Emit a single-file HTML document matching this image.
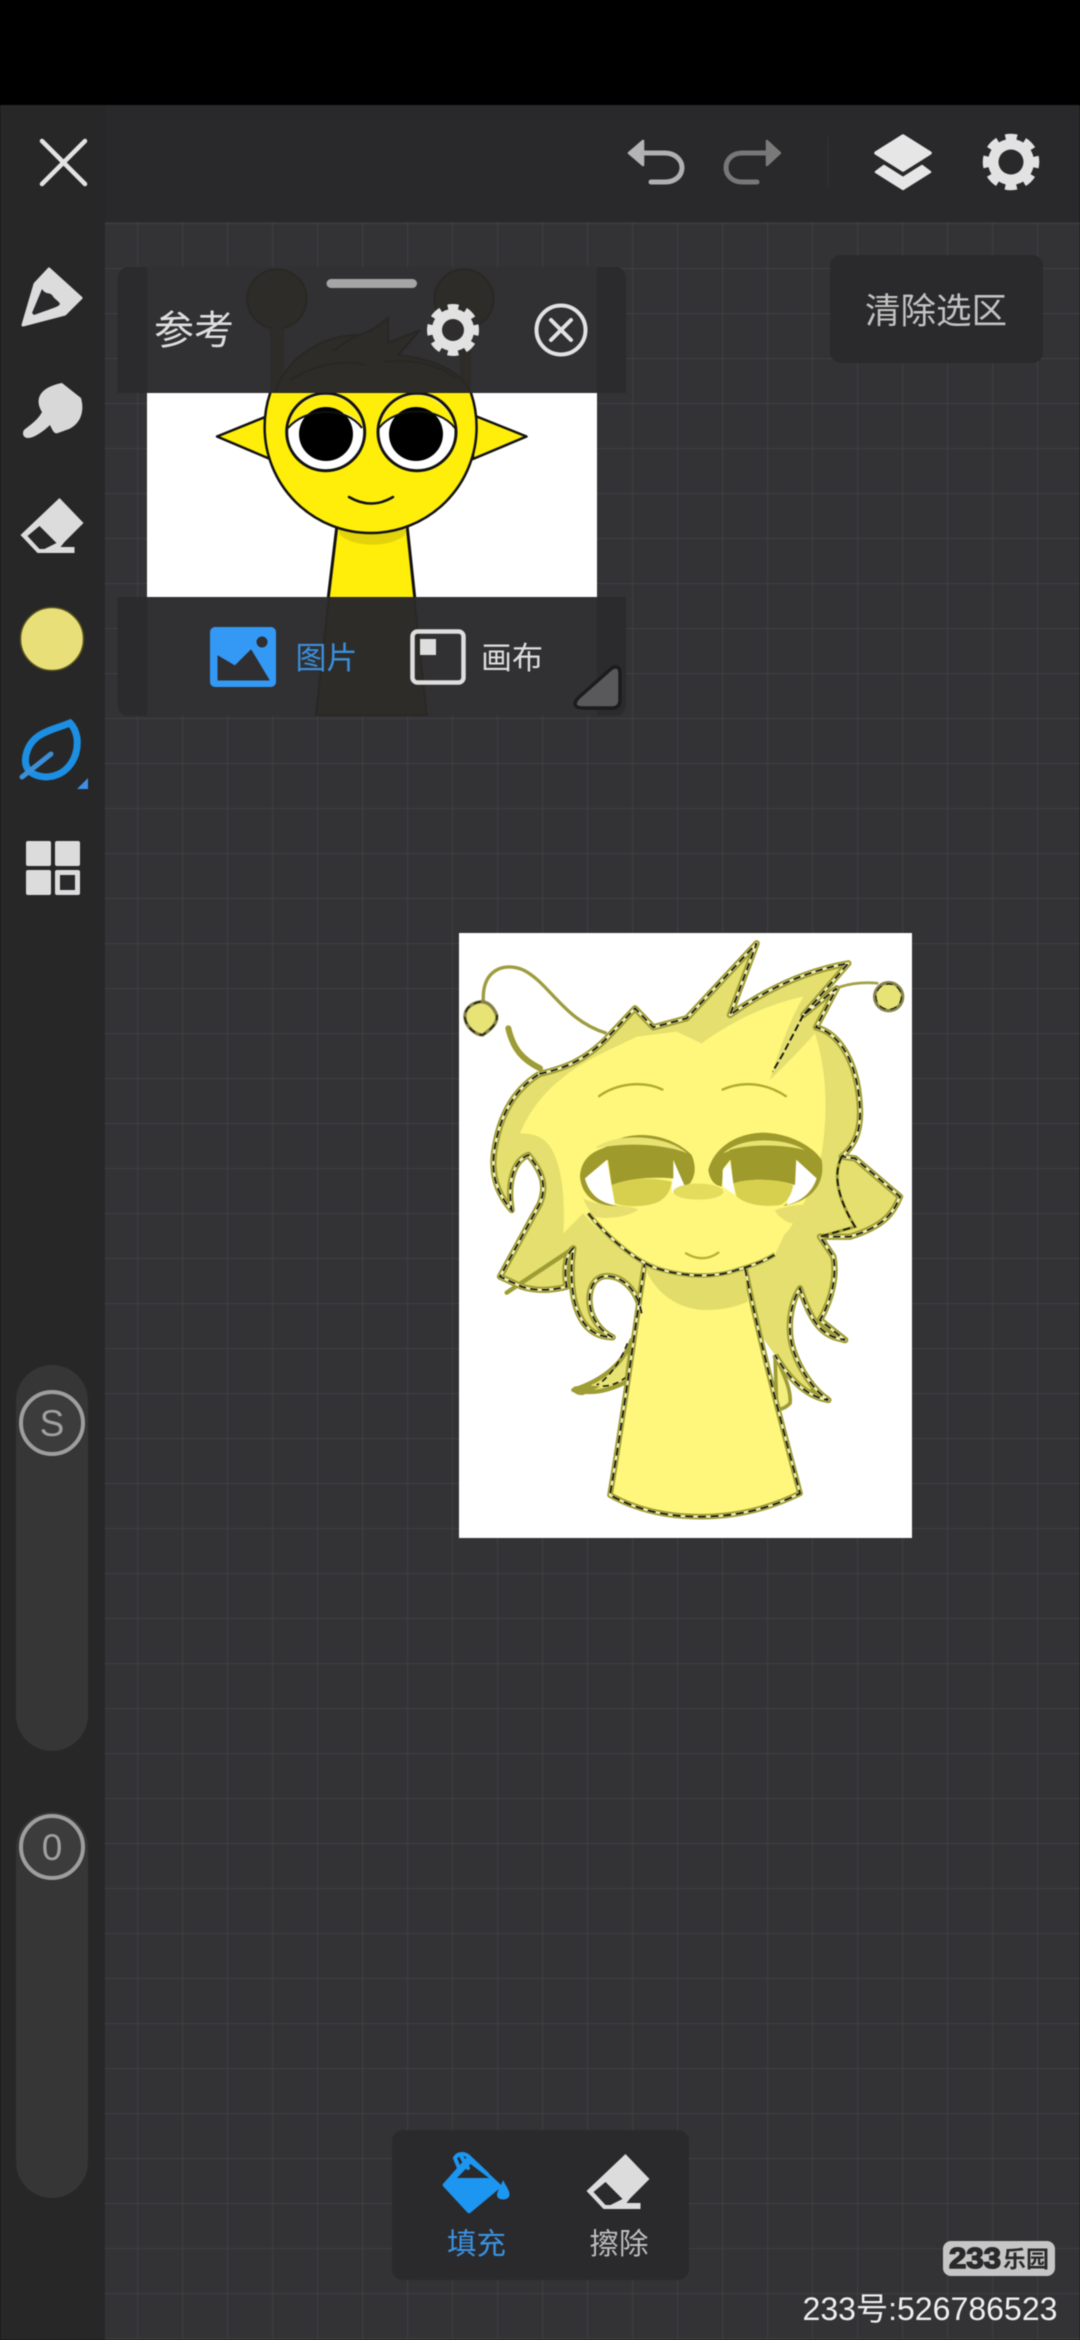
<!DOCTYPE html>
<html lang="zh"><head><meta charset="utf-8"><title>参考</title>
<style>
html,body{margin:0;padding:0;background:#000;width:1080px;height:2340px;overflow:hidden}
svg{display:block;filter:blur(.45px)}
text{font-family:"Liberation Sans","Noto Sans CJK SC",sans-serif}
</style></head><body>
<svg xmlns="http://www.w3.org/2000/svg" width="1080" height="2340" viewBox="0 0 1080 2340">
<defs>
<pattern id="grid" x="2" y="43" width="45" height="45" patternUnits="userSpaceOnUse">
<rect width="45" height="45" fill="#333235"/>
<path d="M0 0H45M0 0V45" stroke="#3f3e41" stroke-width="2.2" fill="none"/>
</pattern>
<clipPath id="win"><rect x="147" y="393" width="450" height="204"/></clipPath>
<g id="gear">
<circle r="23" fill="#e2e2e2"/>
<circle r="25" fill="none" stroke="#e2e2e2" stroke-width="6.500" stroke-dasharray="11.500 8.130" stroke-dashoffset="5.750"/>
</g>
<path id="eraser" fill-rule="evenodd" d="M39 0L63 25L44 44L40 49H54V55H17L0 37ZM19 28L36 45L24 51H19L7 38Z"/>
<path id="hair" d="M268 462C340 445 400 425 470 355L555 265L610 322L710 295L920 70L840 285C960 200 1080 150 1195 130L1060 285L1160 205L1098 322C1170 340 1225 430 1230 570C1232 640 1210 680 1175 710L1215 715L1350 830C1330 880 1300 920 1200 950L1110 950L1150 1010C1160 1060 1150 1130 1110 1200L1185 1260C1130 1250 1090 1230 1050 1105C1020 1150 1010 1230 1030 1290C1050 1350 1090 1410 1135 1440C1070 1430 1020 1380 975 1305L900 1200L600 1160L575 1180C560 1100 510 1068 470 1068C420 1070 410 1130 425 1180C440 1220 465 1240 488 1252C430 1250 395 1220 375 1150C365 1110 360 1050 370 985C350 1000 340 1040 350 1100C310 1110 260 1115 215 1100L150 1070L270 850C290 800 280 760 235 705C195 720 170 780 185 870C140 820 120 760 135 680C150 590 190 510 268 462Z"/>
<path id="hairline" d="M268 462C340 445 400 425 470 355L555 265L610 322L710 295L920 70L840 285C960 200 1080 150 1195 130L1060 285L1160 205L1098 322C1170 340 1225 430 1230 570C1232 640 1210 680 1175 710L1215 715L1350 830C1330 880 1300 920 1200 950L1110 950L1150 1010C1160 1060 1150 1130 1110 1200L1185 1260C1130 1250 1090 1230 1050 1105C1020 1150 1010 1230 1030 1290C1050 1350 1090 1410 1135 1440C1070 1430 1020 1380 975 1305M575 1180C560 1100 510 1068 470 1068C420 1070 410 1130 425 1180C440 1220 465 1240 488 1252C430 1250 395 1220 375 1150C365 1110 360 1050 370 985C350 1000 340 1040 350 1100C310 1110 260 1115 215 1100L150 1070L270 850C290 800 280 760 235 705C195 720 170 780 185 870C140 820 120 760 135 680C150 590 190 510 268 462"/>
<path id="body" d="M585 1025C680 1060 790 1070 885 1045C930 1270 1000 1530 1050 1720C950 1770 850 1790 750 1790C650 1790 560 1770 480 1725C520 1490 550 1260 585 1025Z"/>
<path id="bodyline" d="M885 1045C930 1270 1000 1530 1050 1720C950 1770 850 1790 750 1790C650 1790 560 1770 480 1725C520 1490 550 1260 585 1025"/>
<path id="chin" d="M415 880C470 950 560 1025 620 1045C700 1070 790 1075 860 1050C900 1040 950 1020 975 1003"/>
</defs>

<rect width="1080" height="2340" fill="#272727"/>
<rect width="1080" height="105" fill="#000"/>
<rect x="105" y="105" width="975" height="117" fill="#29282a"/>
<rect x="105" y="222" width="975" height="2118" fill="url(#grid)"/>

<!-- top bar -->
<path d="M42 141L85 184M85 141L42 184" stroke="#e3e3e3" stroke-width="4.500" stroke-linecap="round"/>
<path d="M643 141V165L629 153Z" fill="#b4b4b4" stroke="#b4b4b4" stroke-width="2.500" stroke-linejoin="round"/>
<path d="M642 153H665C675 153 682 160 682 167.500C682 176 675 182 665 182H651" fill="none" stroke="#b0b0b0" stroke-width="5" stroke-linecap="round"/>
<path d="M767 141V165L780 153Z" fill="#7a7a7a" stroke="#7a7a7a" stroke-width="2.500" stroke-linejoin="round"/>
<path d="M768 153H742C732 153 726 160 726 167.500C726 176 733 182 742 182H757" fill="none" stroke="#777" stroke-width="5" stroke-linecap="round"/>
<path d="M828 137V188" stroke="#2e2d2f" stroke-width="2"/>
<path d="M903 136L930 153L903 170L876 153Z" fill="#e6e6e6" stroke="#e6e6e6" stroke-width="3.500" stroke-linejoin="round"/>
<path d="M884 166L903 178L922 166L930 172L903 189L876 172Z" fill="#e6e6e6" stroke="#e6e6e6" stroke-width="2.500" stroke-linejoin="round"/>
<use href="#gear" transform="translate(1011 162)"/>
<circle cx="1011" cy="162" r="12.500" fill="#29282a"/>

<!-- clear selection -->
<rect x="830" y="255" width="213" height="108" rx="11" fill="#2a292b"/>
<text x="865" y="323" font-size="35.500" fill="#c2c2c2">清除选区</text>

<!-- left tools -->
<path d="M49 269L81 298L65 314L23 325L35 284Z" fill="#dcdcdc" stroke="#dcdcdc" stroke-width="3" stroke-linejoin="round"/>
<path d="M32 313L42 289C46 295 49 292 52 295C55 300 58 300 60 304C58 307 56 307 34 315Z" fill="#29282a"/>
<path d="M24 430C30 425 38 420 42 412C32 395 46 386 62 383L81 398C85 412 80 424 69 429L58 433C54 435 52 429 50 425C44 431 34 438 28 438C23 438 22 433 24 430Z" fill="#d8d8d8"/>
<use href="#eraser" fill="#dcdcdc" transform="translate(20.500 498)"/>
<circle cx="52" cy="639" r="31.500" fill="#e8df78" stroke="#5c5520" stroke-width="1.500"/>
<path d="M70 723C50 731 31 733 26 755C23 770 32 776 46 777C68 776 79 757 77 738C76 732 74 727 70 723Z" fill="none" stroke="#1c8fe3" stroke-width="7"/>
<path d="M22 777L51 754" stroke="#3b8fd8" stroke-width="5" stroke-linecap="round"/>
<path d="M77 789L88 778V789Z" fill="#3f8ee8"/>
<rect x="26" y="841" width="25" height="25" rx="2" fill="#dcdcdc"/>
<rect x="55" y="841" width="25" height="25" rx="2" fill="#dcdcdc"/>
<rect x="26" y="870" width="25" height="25" rx="2" fill="#dcdcdc"/>
<rect x="55" y="870" width="25" height="25" rx="2" fill="#dcdcdc"/>
<rect x="60" y="875" width="15" height="15" fill="#29282a"/>

<!-- sliders -->
<rect x="16" y="1365" width="72" height="386" rx="36" fill="#363636"/>
<circle cx="52" cy="1423" r="31" fill="#3c3c3c" stroke="#9e9e9e" stroke-width="4"/>
<text x="52" y="1436" font-size="37" fill="#a0a0a0" text-anchor="middle">S</text>
<rect x="16" y="1812" width="72" height="386" rx="36" fill="#363636"/>
<circle cx="52" cy="1847" r="31" fill="#3c3c3c" stroke="#9e9e9e" stroke-width="4"/>
<text x="52" y="1860" font-size="37" fill="#a0a0a0" text-anchor="middle">0</text>

<!-- reference panel -->
<path d="M147 267H130Q117.500 267 117.500 280V393H147Z" fill="#2b2a2c"/>
<path d="M597 267H614Q626 267 626 280V393H597Z" fill="#2b2a2c"/>
<path d="M117.500 597H147V716H130Q117.500 716 117.500 703Z" fill="#2b2a2c"/>
<path d="M597 597H626V703Q626 716 614 716H597Z" fill="#2b2a2c"/>
<rect x="147" y="267" width="450" height="126" fill="#313032"/>
<rect x="147" y="597" width="450" height="119" fill="#313032"/>
<!-- dark through-view of reference figure -->
<g fill="#2e2c28" stroke="#292824" stroke-width="2">
<circle cx="277" cy="299" r="29.500"/><circle cx="464" cy="299" r="29.500"/>
<rect x="270" y="328" width="14" height="65" stroke="none"/>
<rect x="460" y="328" width="11" height="65" stroke="none"/>
<path d="M275 393C285 360 320 335 359 335C370 332 380 325 388 318L388 343L420 330L398 355C440 360 465 375 470 393Z"/>
<path d="M329 597H414L426.500 715H316Z"/>
</g>
<path d="M333 351C345 342 352 338 359 335M420 330L398 355M290 380C320 362 345 360 365 365M385 362C410 358 440 365 455 378" stroke="#282723" stroke-width="2" fill="none"/>

<rect x="147" y="393" width="450" height="204" fill="#fff"/>
<g clip-path="url(#win)">
<path d="M217 436.500L270 415V459Z" fill="#ffee0a" stroke="#111" stroke-width="2.500" stroke-linejoin="round"/>
<path d="M526.500 436.500L473 415V459Z" fill="#ffee0a" stroke="#111" stroke-width="2.500" stroke-linejoin="round"/>
<path d="M337 525L328 600H415L407 525Z" fill="#ffee0a" stroke="#111" stroke-width="3"/>
<path d="M340 535C355 548 390 548 405 535L407 525H337Z" fill="#e2d30c"/>
<circle cx="370.600" cy="427" r="106" fill="#ffee0a" stroke="#111" stroke-width="2.500"/>
<ellipse cx="325.700" cy="432" rx="39" ry="38.700" fill="#fff" stroke="#111" stroke-width="3"/>
<ellipse cx="417" cy="432" rx="39" ry="38.700" fill="#fff" stroke="#111" stroke-width="3"/>
<path d="M288 428C292 405 310 395 326 395C345 395 361 410 363 428C350 405 310 405 288 428Z" fill="#ffee0a"/>
<path d="M379 428C384 405 400 395 417 395C435 395 452 410 455 428C435 405 400 405 379 428Z" fill="#ffee0a"/>
<circle cx="326" cy="434" r="27" fill="#000"/>
<circle cx="416" cy="434" r="27" fill="#000"/>
<path d="M288 428C305 408 345 405 362 428M379 428C396 406 438 406 455 428" fill="none" stroke="#111" stroke-width="2"/>
<path d="M349 497Q371 510 393 497" fill="none" stroke="#111" stroke-width="2.500" stroke-linecap="round"/>
</g>

<rect x="326.500" y="279" width="90.500" height="9" rx="4.500" fill="#a5a5a5"/>
<text x="154" y="344" font-size="40" fill="#dedede">参考</text>
<use href="#gear" transform="translate(453 330) scale(.92)"/>
<circle cx="453" cy="330" r="11" fill="#2f2d2e"/>
<circle cx="561" cy="330" r="24.500" fill="none" stroke="#e2e2e2" stroke-width="4"/>
<path d="M551 320L571 340M571 320L551 340" stroke="#e2e2e2" stroke-width="4" stroke-linecap="round"/>

<rect x="210" y="627" width="66" height="60" rx="5" fill="#3399f5"/>
<path d="M218 680V656L235 666L251 650L269 680Z" fill="#2f2e30" stroke="#2f2e30" stroke-width="1" stroke-linejoin="round"/>
<circle cx="262" cy="642" r="5.500" fill="#2f2e30"/>
<text x="295.500" y="669" font-size="31" fill="#3b8fdc">图片</text>
<rect x="412.500" y="631.500" width="51" height="51" rx="5" fill="none" stroke="#dedede" stroke-width="4.500"/>
<rect x="420" y="639" width="16" height="16" fill="#dedede"/>
<text x="481" y="669" font-size="31" fill="#dedede">画布</text>
<path d="M612 668Q620 664 620 674V700Q620 708 612 708H584Q570 708 578 698Z" fill="#59585b" stroke="#1c1c1e" stroke-width="3.500" stroke-linejoin="round"/>

<!-- main artwork -->
<rect x="459" y="933" width="453" height="605" fill="#fff"/>
<g transform="translate(450 920) scale(.33333)">
<!-- antennae -->
<path d="M100 245C95 150 160 125 220 150C300 190 340 300 470 340" fill="none" stroke="#9e9c3e" stroke-width="10"/>
<path d="M1140 215C1180 190 1240 185 1285 190" fill="none" stroke="#a3a148" stroke-width="8"/>
<path d="M92 245C60 250 42 270 45 295C50 325 80 345 98 345C120 330 145 310 140 285C130 260 115 245 92 245Z" fill="#e8e375" stroke="#85834a" stroke-width="10"/>
<circle cx="1316" cy="230" r="42" fill="#e8e375" stroke="#85834a" stroke-width="10"/>
<path d="M92 245C60 250 42 270 45 295C50 325 80 345 98 345C120 330 145 310 140 285" fill="none" stroke="#111" stroke-width="4" stroke-dasharray="22 14"/>
<circle cx="1316" cy="230" r="38" fill="none" stroke="#111" stroke-width="3.500" stroke-dasharray="20 14"/>
<!-- left lower tail -->
<path d="M545 1260C520 1330 460 1380 370 1410C430 1425 480 1410 530 1385Z" fill="#e8e375" stroke="#9e9c34" stroke-width="13" stroke-linejoin="round"/>
<path d="M532 1270C510 1330 470 1380 440 1395M530 1370C500 1395 470 1400 450 1398" fill="none" stroke="#111" stroke-width="4.500" stroke-dasharray="18 12"/>
<path d="M372 1400C400 1395 420 1395 450 1400L400 1425C380 1428 362 1415 372 1400Z" fill="#9e9c34"/>
<!-- right small tail -->
<path d="M975 1305C1000 1360 1025 1410 1020 1450C1000 1470 985 1470 980 1460Z" fill="#f3ee80" stroke="#9e9c34" stroke-width="11"/>
<!-- hair -->
<use href="#hair" fill="#e4df6e"/>
<use href="#hairline" fill="none" stroke="#9e9c34" stroke-width="19" stroke-linejoin="round"/>
<!-- thick accent strokes -->
<path d="M175 325C190 390 220 420 270 445" fill="none" stroke="#9e9c34" stroke-width="18" stroke-linecap="round"/>
<path d="M370 985L170 1118" stroke="#9e9c34" stroke-width="13" stroke-linecap="round"/>
<path d="M1110 1200L1185 1260" stroke="#9e9c34" stroke-width="20" stroke-linecap="round"/>
<path d="M1090 1410L1135 1440" stroke="#9e9c34" stroke-width="18" stroke-linecap="round"/>
<!-- light face/hair -->
<path d="M330 480C400 420 480 390 560 350L680 335L755 370C850 300 960 250 1060 230C1010 320 985 400 960 480C1010 430 1050 390 1095 340C1130 450 1135 570 1115 700C1090 800 1060 860 1020 925C950 1010 830 1060 740 1065C620 1050 490 990 400 880L350 930L340 940C345 850 340 740 300 680C280 650 250 640 210 640C240 570 280 520 330 480Z" fill="#fff67c"/>
<path d="M415 880C480 960 600 1040 760 1065C840 1060 920 1035 975 1005C1000 950 1010 930 1020 905C960 890 900 880 860 870L740 860L560 870C500 880 450 880 415 880Z" fill="#fff67c"/>
<path d="M400 835C440 860 520 850 565 868C540 890 470 900 435 890C415 870 405 850 400 835Z" fill="#e6df70"/>
<path d="M975 870C1040 850 1090 850 1125 860C1090 905 1040 920 1010 905C995 895 980 885 975 870Z" fill="#e6df70"/>
<!-- body -->
<use href="#body" fill="#fff67c"/>
<use href="#bodyline" fill="none" stroke="#9e9c34" stroke-width="17" stroke-linejoin="round"/>
<path d="M592 1060C640 1150 720 1170 770 1170C820 1170 860 1160 893 1145L885 1050C800 1070 680 1065 590 1030Z" fill="#e2dc6b"/>
<!-- chin -->
<use href="#chin" fill="none" stroke="#9e9c34" stroke-width="13"/>
<!-- brows -->
<path d="M445 530C500 490 580 480 640 510" fill="none" stroke="#adaa30" stroke-width="7"/>
<path d="M815 510C880 480 950 490 1010 530" fill="none" stroke="#adaa30" stroke-width="7"/>
<!-- eyes -->
<path d="M390 770C395 700 450 690 470 680C520 630 650 630 725 705C740 740 735 770 720 790L700 800L670 720L470 720L405 775C415 820 450 850 505 858C440 860 395 830 390 770Z" fill="#9e9a2c"/>
<path d="M440 680C500 640 640 640 712 700C640 670 520 670 440 685Z" fill="#e8e271"/>
<path d="M470 720L405 775C420 825 450 848 495 855Z" fill="#fff"/>
<path d="M670 720L705 800L665 820Z" fill="#fff"/>
<path d="M468 680C540 670 620 672 670 690L670 775C600 770 540 775 485 795Z" fill="#9e9a2c"/>
<path d="M485 795C540 775 600 770 665 785C662 810 650 835 620 848C580 862 530 862 495 850Z" fill="#d6d04e"/>
<path d="M775 750C790 690 850 640 940 638C1020 640 1090 680 1115 720C1125 780 1100 840 1000 858L1090 790L1040 720L840 720L820 745L815 800L800 795C785 785 778 770 775 750Z" fill="#9e9a2c"/>
<path d="M820 700C870 650 1000 650 1065 690C990 670 880 672 820 700Z" fill="#e8e271"/>
<path d="M1040 720L1100 775C1085 820 1050 845 1010 855Z" fill="#fff"/>
<path d="M840 725L818 750L818 800L855 825Z" fill="#fff"/>
<path d="M838 690C900 672 990 672 1040 690L1035 795C970 775 900 775 850 790Z" fill="#9e9a2c"/>
<path d="M850 790C900 775 970 775 1030 795C1025 820 1015 845 990 855C940 862 890 855 860 830Z" fill="#d6d04e"/>
<ellipse cx="745" cy="815" rx="75" ry="24" fill="#e3dc5c"/>
<!-- mouth -->
<path d="M708 1000Q760 1030 805 998" fill="none" stroke="#b5b130" stroke-width="7" stroke-linecap="round"/>
<!-- dashed selection -->
<use href="#hairline" fill="none" stroke="#f7f5b8" stroke-width="7" stroke-linejoin="round"/>
<use href="#hairline" fill="none" stroke="#111" stroke-width="5" stroke-dasharray="22 13"/>
<use href="#bodyline" fill="none" stroke="#f7f5b8" stroke-width="6"/>
<use href="#bodyline" fill="none" stroke="#111" stroke-width="5" stroke-dasharray="24 14"/>
<use href="#chin" fill="none" stroke="#f7f5b8" stroke-width="6"/>
<use href="#chin" fill="none" stroke="#111" stroke-width="5" stroke-dasharray="24 14"/>
<path d="M1060 285L1000 400L968 455" fill="none" stroke="#111" stroke-width="5.500" stroke-dasharray="22 10"/>
<path d="M1175 710C1150 760 1160 830 1215 920L1110 950" fill="none" stroke="#9e9c34" stroke-width="9"/>
<path d="M1175 710C1150 760 1160 830 1215 920L1110 950" fill="none" stroke="#111" stroke-width="5" stroke-dasharray="22 12"/>
</g>

<!-- bottom fill panel -->
<rect x="392" y="2130" width="297" height="150" rx="11" fill="#2a292b"/>
<path d="M469 2158L499 2186L469 2211L445 2185Z" fill="#1c96f0" stroke="#1c96f0" stroke-width="4.500" stroke-linejoin="round"/>
<path d="M457 2178L470.500 2164L489 2178Z" fill="#2a292b"/>
<path d="M459 2168L455 2158C458 2153 464 2153 468 2156L487 2174M468 2168L461 2156" fill="none" stroke="#1c96f0" stroke-width="4" stroke-linecap="round"/>
<path d="M503 2180C506 2186 510 2191 509.500 2195C509 2201 497 2201 497 2195C497 2191 501 2186 503 2180Z" fill="#1c96f0"/>
<use href="#eraser" fill="#dcdcdc" transform="translate(586.500 2154)"/>
<text x="447" y="2254" font-size="29.500" fill="#3a92e0">填充</text>
<text x="589.500" y="2254" font-size="29.500" fill="#bdbdbd">擦除</text>

<!-- watermark -->
<rect x="943" y="2241" width="112" height="35" rx="8" fill="#c6c6c6"/>
<text x="949" y="2268" font-size="29" font-weight="bold" fill="#29282a" stroke="#29282a" stroke-width="1.500" textLength="52" lengthAdjust="spacingAndGlyphs">233</text>
<text x="1003" y="2267" font-size="23" font-weight="bold" fill="#29282a">乐园</text>
<text x="802.500" y="2320" font-size="32" fill="#efefef" textLength="255" lengthAdjust="spacingAndGlyphs">233号:526786523</text>
</svg>
</body></html>
